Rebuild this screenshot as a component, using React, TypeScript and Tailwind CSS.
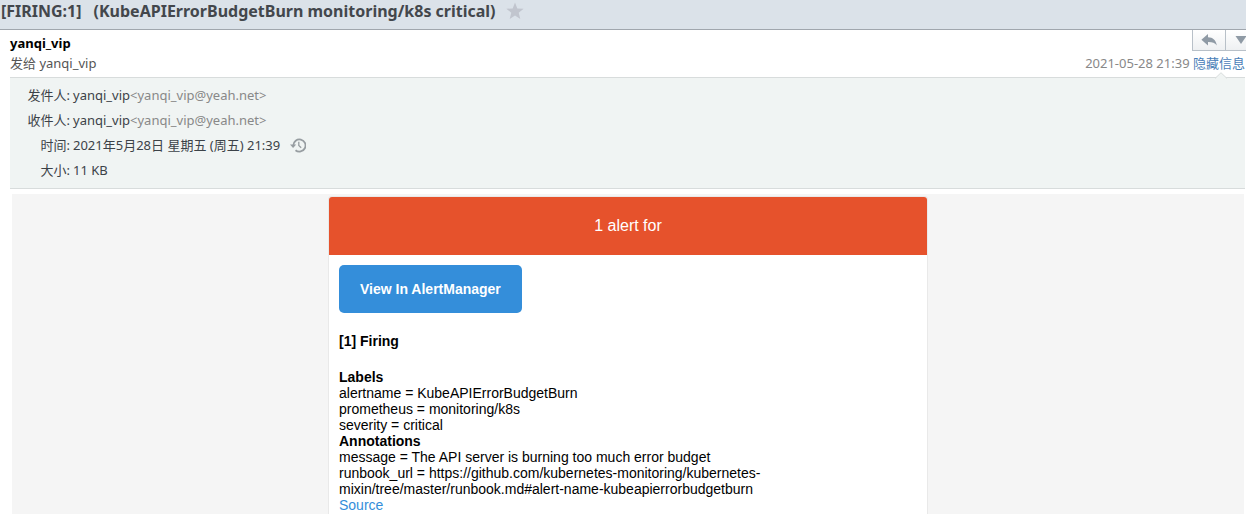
// Mail reading pane: subject bar, sender summary, header details and the alert message body.

import type { ReactNode } from "react";

interface DetailRowProps {
  label: string;
  children: ReactNode;
}

const labels = [
  { name: "alertname", value: "KubeAPIErrorBudgetBurn" },
  { name: "prometheus", value: "monitoring/k8s" },
  { name: "severity", value: "critical" },
];

const annotations = [
  { name: "message", value: "The API server is burning too much error budget" },
  {
    name: "runbook_url",
    value:
      "https://github.com/kubernetes-monitoring/kubernetes-mixin/tree/master/runbook.md#alert-name-kubeapierrorbudgetburn",
  },
];

function StarIcon() {
  return (
    <svg viewBox="0 0 18 18" className="size-[18px]" fill="#c1c5ce">
      <path d="M9 0.500l2.300 5.900 6.300.4-4.900 4 1.600 6.200L9 13.600 3.700 17l1.600-6.200-4.900-4 6.300-.4z" />
    </svg>
  );
}

function ReplyIcon() {
  return (
    <svg viewBox="0 0 16 14" className="h-[14px] w-4" fill="#8f9aa5">
      <path d="M7 1v3.200c5 .2 8 2.800 8.800 8.300-2-2.600-4.600-3.500-8.800-3.400v3.400L.4 6.700z" />
    </svg>
  );
}

function HistoryIcon() {
  return (
    <svg viewBox="0 0 16 16" className="h-4 w-4" fill="none" stroke="#979da1">
      <path d="M3.300 8.400a6.100 6.100 0 1 1 2.200 4.800" strokeWidth="1.800" />
      <path d="M0 7.600h6.200L3.100 11z" fill="#979da1" stroke="none" />
      <path d="M8.800 4.800v3.700l2.400 2.300" strokeWidth="1.300" />
    </svg>
  );
}

function DetailRow({ label, children }: DetailRowProps) {
  return (
    <div className="flex h-[25px] items-center">
      <dt className="w-[60px] shrink-0 text-right">{label}:</dt>
      <dd className="flex items-center pl-[3px]">{children}</dd>
    </div>
  );
}

function Contact() {
  return (
    <span>
      yanqi_vip<span className="text-[#888888]">&lt;yanqi_vip@yeah.net&gt;</span>
    </span>
  );
}

export default function App() {
  return (
    <div className="h-screen overflow-hidden bg-white font-['Noto_Sans','Noto_Sans_CJK_SC',sans-serif] text-[13px] leading-5 text-[#3c4248]">
      {/* Subject */}
      <header className="flex h-[30px] items-center border-b border-[#a0a6ad] bg-[#dbe2e9] pb-[7px] pl-px">
        <h1 className="flex gap-3 text-base font-bold text-[#43474c]">
          <span>[FIRING:1]</span>
          <span>(KubeAPIErrorBudgetBurn monitoring/k8s critical)</span>
        </h1>
        <button type="button" aria-label="星标" className="ml-[10px]">
          <StarIcon />
        </button>
      </header>

      {/* Sender summary */}
      <section className="flex h-[47px] justify-between pl-[10px]">
        <div className="pt-[3px]">
          <p className="font-bold text-black">yanqi_vip</p>
          <p className="text-[#555555]">发给 yanqi_vip</p>
        </div>
        <div className="flex flex-col items-end">
          <div className="flex h-[21px] w-[54px] overflow-hidden border-b border-l border-[#b8c0c8] bg-linear-to-b from-white to-[#eef0f2]">
            <button
              type="button"
              aria-label="回复"
              className="flex w-[33px] shrink-0 items-center justify-center border-r border-[#b8c0c8]"
            >
              <ReplyIcon />
            </button>
            <button type="button" aria-label="更多" className="shrink-0 pl-[9px]">
              <svg viewBox="0 0 12 8" className="h-2 w-3" fill="#8f9aa5">
                <path d="M0.500 0h11L6 8z" />
              </svg>
            </button>
          </div>
          <p className="mt-[2px] pr-px text-[#888888]">
            2021-05-28 21:39{" "}
            <a href="#details" className="text-[#4a80b8]">
              隐藏信息
            </a>
          </p>
        </div>
      </section>

      {/* Header details */}
      <section
        id="details"
        className="relative mr-px ml-[10px] border-y border-[#d8dcdc] bg-[#f0f4f3] pt-1 pb-[6px]"
      >
        <svg
          viewBox="0 0 12 7"
          className="absolute -top-[6px] right-[18px] h-[7px] w-3"
          fill="#f0f4f3"
          stroke="#d8dcdc"
        >
          <path d="M0 6.500L6 .7l6 5.800" />
        </svg>
        <dl>
          <DetailRow label="发件人">
            <Contact />
          </DetailRow>
          <DetailRow label="收件人">
            <Contact />
          </DetailRow>
          <DetailRow label="时间">
            <span>2021年5月28日 星期五 (周五) 21:39</span>
            <button type="button" aria-label="历史邮件" className="ml-[10px]">
              <HistoryIcon />
            </button>
          </DetailRow>
          <DetailRow label="大小">11 KB</DetailRow>
        </dl>
      </section>

      {/* Message body */}
      <main className="mt-[5px] mr-[2px] ml-3 bg-[#f5f5f5] pt-[2px] font-['Liberation_Sans',sans-serif] text-sm leading-4 text-black">
        <article className="mx-auto max-w-[600px] rounded-[3px] border border-[#e9e9e9] bg-white">
          <h2 className="rounded-t-[3px] bg-[#e6522c] p-5 text-center text-base leading-[18px] font-medium text-white">
            1 alert for
          </h2>
          <div className="p-[10px]">
            <a
              href="#alertmanager"
              className="inline-block rounded-[5px] bg-[#348eda] px-[21px] py-4 font-bold text-white"
            >
              View In AlertManager
            </a>
            <h3 className="mt-5 font-bold">[1] Firing</h3>
            <div className="mt-5">
              <h4 className="font-bold">Labels</h4>
              {labels.map((item) => (
                <p key={item.name}>{`${item.name} = ${item.value}`}</p>
              ))}
              <h4 className="font-bold">Annotations</h4>
              {annotations.map((item) => (
                <p key={item.name}>{`${item.name} = ${item.value}`}</p>
              ))}
              <a href="#source" className="text-[#348eda]">
                Source
              </a>
            </div>
          </div>
        </article>
      </main>
    </div>
  );
}
